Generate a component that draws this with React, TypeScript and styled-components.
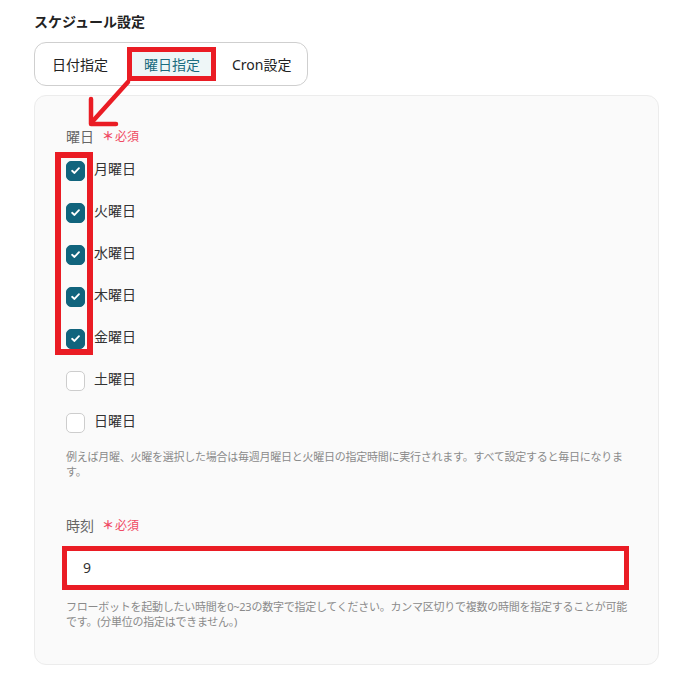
import React from 'react';
import styled, { createGlobalStyle } from 'styled-components';

const GlobalStyle = createGlobalStyle`
  html, body {
    margin: 0;
    padding: 0;
    background: #ffffff;
  }
  body {
    font-family: "Noto Sans", "Noto Sans CJK JP", sans-serif;
    color: #222;
  }
`;

const Page = styled.div`
  position: relative;
  width: 625px;
  padding: 12px 40px 27px 34px;
`;

const Title = styled.div`
  font-size: 14px;
  font-weight: 700;
  line-height: 20px;
  color: #222;
`;

const Segments = styled.div`
  display: inline-flex;
  align-items: center;
  margin-top: 10px;
  height: 42px;
  border: 1px solid #cfcfcf;
  border-radius: 12px;
  background: #fff;
`;

const Segment = styled.div<{ $active?: boolean }>`
  position: relative;
  display: flex;
  align-items: center;
  height: ${(p) => (p.$active ? '34px' : '42px')};
  padding: 0 ${(p) => (p.$active ? '16px 0 17px' : '17px')};
  font-size: 14px;
  color: ${(p) => (p.$active ? '#1b6c80' : '#222')};
  background: ${(p) => (p.$active ? '#eef6f7' : 'transparent')};
  &:first-child {
    padding: 0 19px 0 17px;
  }
  &:last-child {
    padding: 0 16px 0 16px;
  }
`;

const Mark = styled.span<{ $stroke: number }>`
  position: absolute;
  border: ${(p) => p.$stroke}px solid #ea1c24;
  pointer-events: none;
`;

const TabMark = styled(Mark)`
  inset: 0;
`;

const Arrow = styled.svg`
  position: absolute;
  left: 0;
  top: 0;
  pointer-events: none;
  z-index: 2;
`;

const Panel = styled.div`
  margin-top: 9px;
  padding: 30px 31px 35px 31px;
  border: 1px solid #ececec;
  border-radius: 12px;
  background: #fafafa;
`;

const Label = styled.div<{ $gap?: number }>`
  display: flex;
  align-items: center;
  height: 20px;
  margin-top: ${(p) => p.$gap ?? 0}px;
  font-size: 14px;
  color: #666;
`;

const Required = styled.span`
  margin-left: 8px;
  font-size: 12px;
  color: #f04a64;
  span {
    font-weight: 700;
    margin-right: 1px;
  }
`;

const DayList = styled.div`
  position: relative;
  margin-top: 2px;
`;

const DayRow = styled.label`
  display: flex;
  align-items: center;
  height: 42px;
  gap: 9px;
  font-size: 14px;
  color: #333;
`;

const Box = styled.span<{ $checked: boolean }>`
  display: flex;
  align-items: center;
  justify-content: center;
  width: 19px;
  height: 20px;
  margin-top: 3px;
  box-sizing: border-box;
  border-radius: 5px;
  background: ${(p) => (p.$checked ? '#11647d' : '#fff')};
  border: 1px solid ${(p) => (p.$checked ? '#11647d' : '#cdcdcd')};
  svg {
    width: 11px;
    height: 11px;
  }
`;

const DayName = styled.span`
  line-height: 20px;
`;

const BoxMark = styled(Mark)`
  left: -11px;
  top: 4px;
  width: 38px;
  height: 203px;
  box-sizing: border-box;
`;

const Help = styled.p<{ $gap: number }>`
  margin: ${(p) => p.$gap}px 0 0;
  font-size: 11px;
  line-height: 15px;
  letter-spacing: -0.25px;
  color: #8a8a8a;
`;

const InputWrap = styled.div`
  position: relative;
  margin-top: 11px;
`;

const Input = styled.div`
  display: flex;
  align-items: center;
  height: 42px;
  box-sizing: border-box;
  padding-left: 16px;
  border: 1px solid #dcdcdc;
  border-radius: 6px;
  background: #fff;
  font-size: 14px;
  color: #333;
`;

const InputMark = styled(Mark)`
  left: -4px;
  top: 0;
  right: -2px;
  bottom: -2px;
`;

const Check = () => (
  <svg viewBox="0 0 12 12">
    <path d="M2.3 6.3 L4.9 8.7 L9.8 3.5" fill="none" stroke="#fff" strokeWidth="2" strokeLinecap="round" strokeLinejoin="round" />
  </svg>
);

const days = [
  { name: '月曜日', checked: true },
  { name: '火曜日', checked: true },
  { name: '水曜日', checked: true },
  { name: '木曜日', checked: true },
  { name: '金曜日', checked: true },
  { name: '土曜日', checked: false },
  { name: '日曜日', checked: false },
];

export default function App() {
  return (
    <Page>
      <GlobalStyle />
      <Title>スケジュール設定</Title>
      <Segments>
        <Segment>日付指定</Segment>
        <Segment $active>
          曜日指定
          <TabMark $stroke={5} />
        </Segment>
        <Segment>Cron設定</Segment>
      </Segments>
      <Arrow width="150" height="140" viewBox="0 0 150 140">
        <g fill="none" stroke="#ea1c24" strokeWidth="4.5" strokeLinecap="round" strokeLinejoin="round">
          <path d="M128 82 L92 122" />
          <path d="M91 99 L91 124 L116 124" />
        </g>
      </Arrow>
      <Panel>
        <Label>
          曜日
          <Required><span>＊</span>必須</Required>
        </Label>
        <DayList>
          {days.map((d) => (
            <DayRow key={d.name}>
              <Box $checked={d.checked}>{d.checked && <Check />}</Box>
              <DayName>{d.name}</DayName>
            </DayRow>
          ))}
          <BoxMark $stroke={6} />
        </DayList>
        <Help $gap={7}>
          例えば月曜、火曜を選択した場合は毎週月曜日と火曜日の指定時間に実行されます。すべて設定すると毎日になります。
        </Help>
        <Label $gap={36}>
          時刻
          <Required><span>＊</span>必須</Required>
        </Label>
        <InputWrap>
          <Input>9</Input>
          <InputMark $stroke={5} />
        </InputWrap>
        <Help $gap={11}>
          フローボットを起動したい時間を0~23の数字で指定してください。カンマ区切りで複数の時間を指定することが可能です。(分単位の指定はできません。)
        </Help>
      </Panel>
    </Page>
  );
}
